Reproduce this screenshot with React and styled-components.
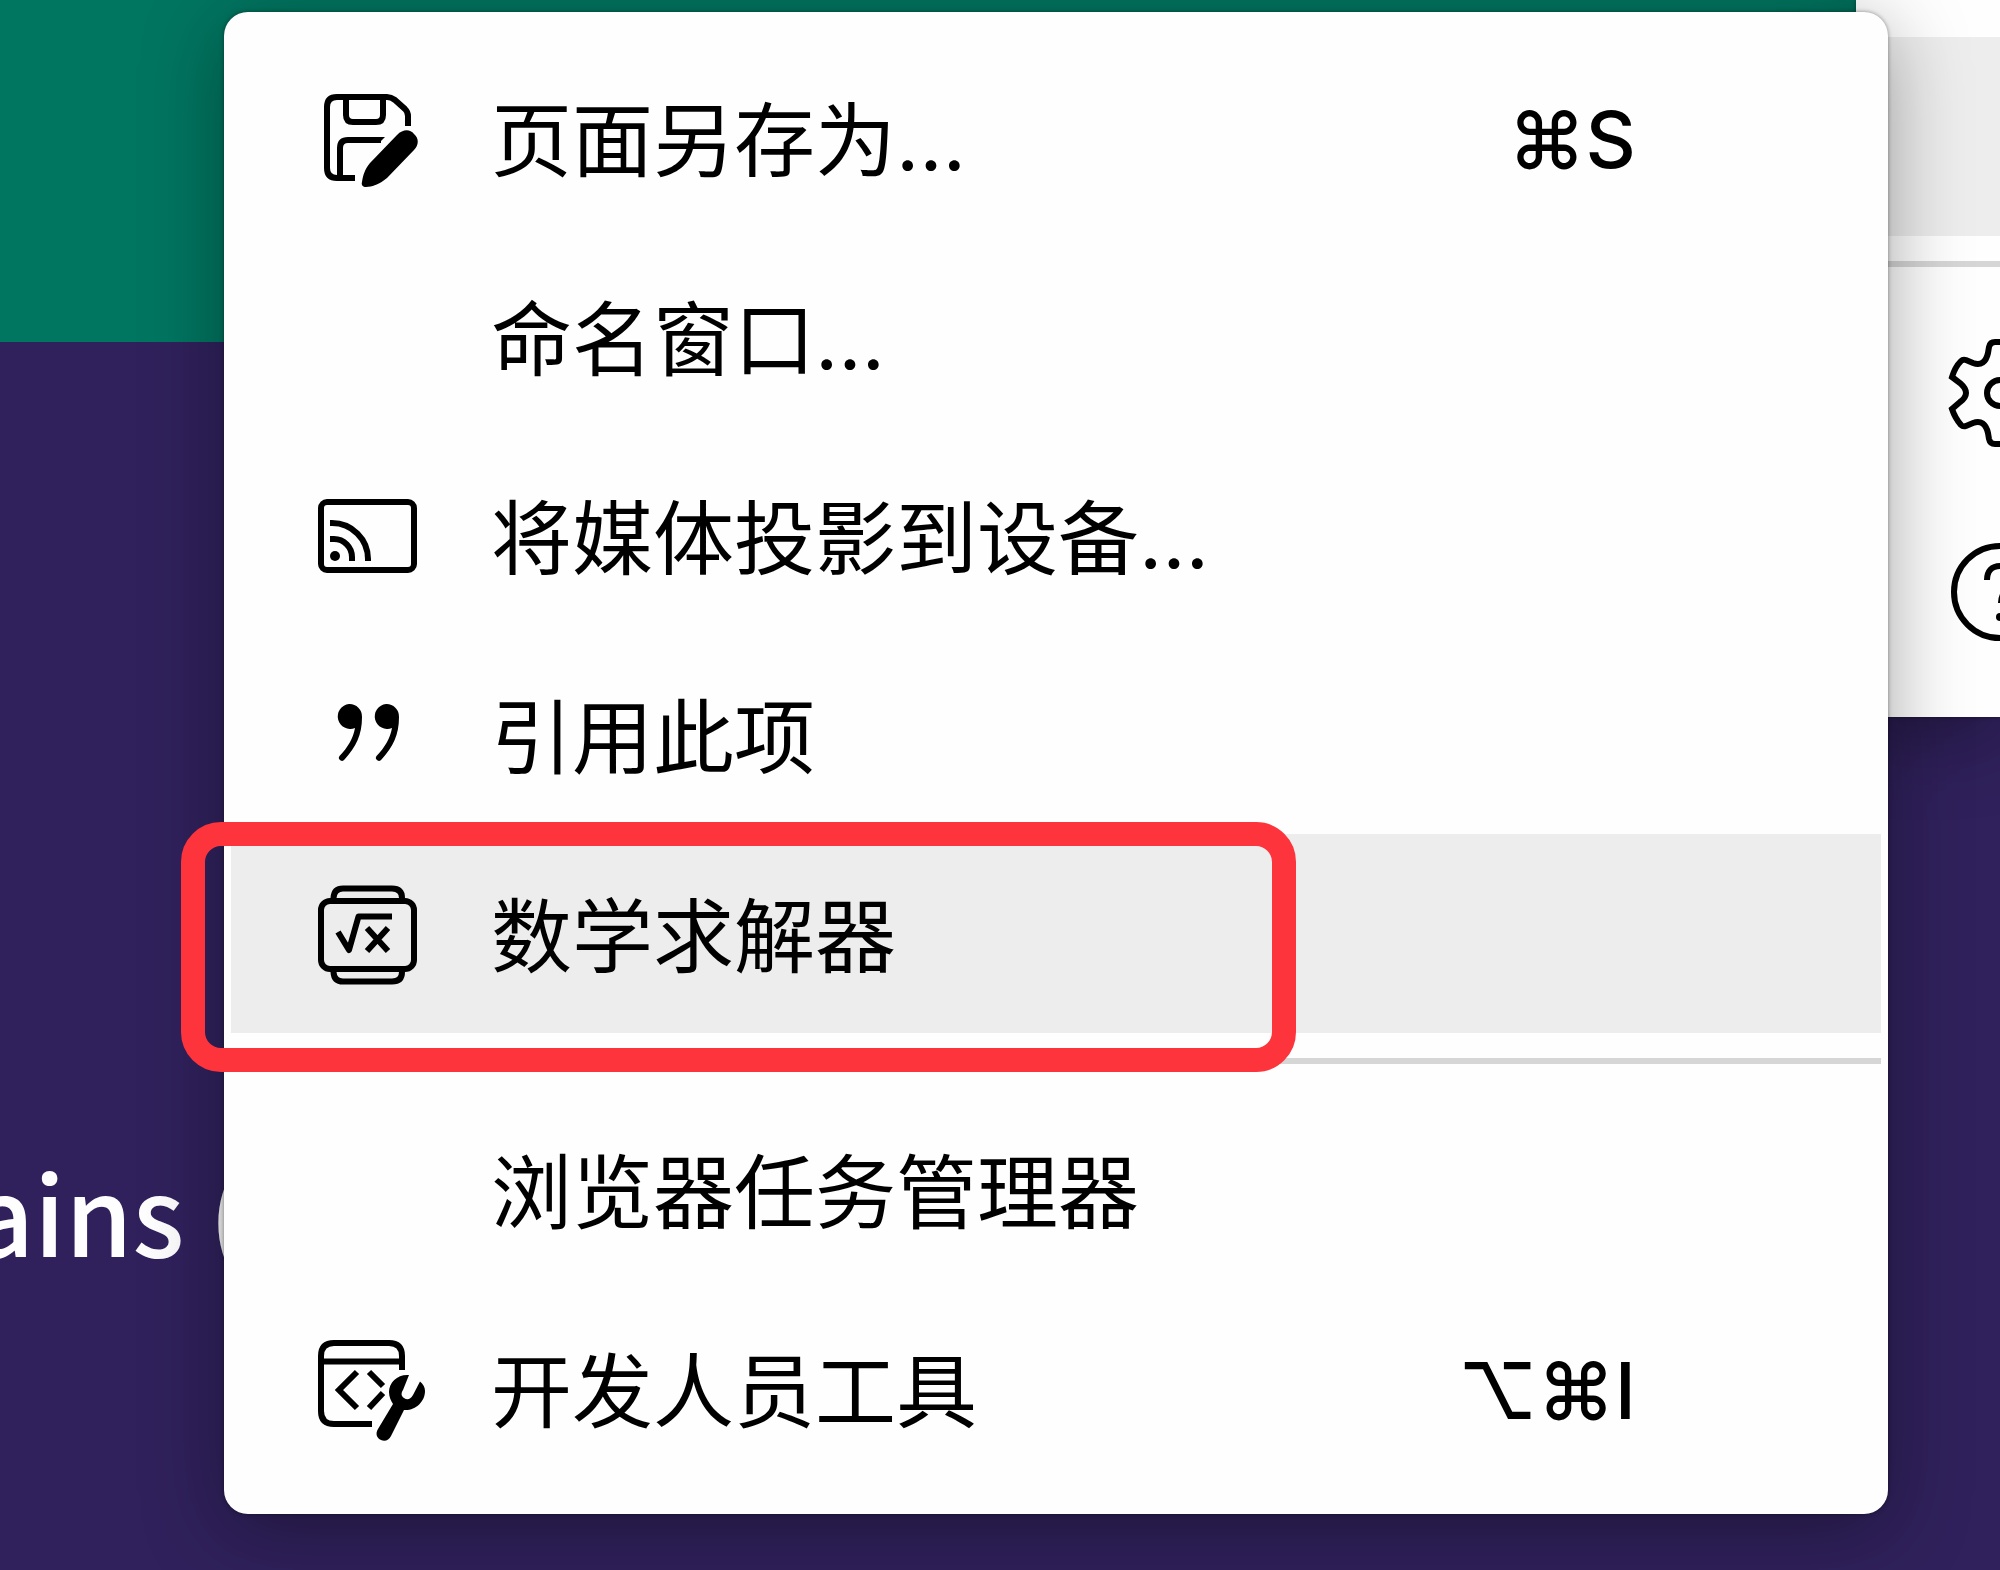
import React from 'react';
import styled, { createGlobalStyle, css } from 'styled-components';

const colors = {
  green: '#007560',
  purple: '#30215c',
  white: '#fefefe',
  black: '#000',
  hover: '#ededed',
  line: '#d6d6d6',
  red: '#fe343c'
};

const fonts = {
  MENU: "Inter, 'Noto Sans CJK SC', sans-serif",
  HEADLINE: "'Noto Sans CJK SC', sans-serif"
};

const GlobalStyle = createGlobalStyle`
  *, *::before, *::after {
    box-sizing: border-box;
  }

  body {
    margin: 0;
    background: ${colors.purple};
  }
`;

const Page = styled.div`
  position: relative;
  display: grid;
  min-height: 100vh;
  overflow: hidden;
`;

const Backdrop = styled.main`
  grid-area: 1 / 1;
  display: flex;
  flex-direction: column;
  background: ${colors.purple};
`;

const Banner = styled.header`
  height: 342px;
  background: ${colors.green};
`;

const Headline = styled.h1`
  margin: 798px 0 0 -28px;
  font-family: ${fonts.HEADLINE};
  font-size: 108px;
  font-weight: 500;
  line-height: 140px;
  white-space: nowrap;
  color: ${colors.white};
`;

const shadow = css`
  box-shadow: 0 16px 80px rgba(0, 0, 0, 0.36), 0 0 4px rgba(0, 0, 0, 0.4);
`;

const ParentMenu = styled.div`
  position: absolute;
  top: 0;
  right: 0;
  width: 144px;
  padding: 37px 0 26px 7px;
  overflow: hidden;
  background: ${colors.white};
  ${shadow}
`;

const SubmenuArea = styled.div`
  grid-area: 1 / 1;
  z-index: 1;
  padding: 12px 112px 56px 224px;
`;

const Menu = styled.div`
  padding: 26px 7px;
  border-radius: 24px;
  background: ${colors.white};
  ${shadow}
`;

const Row = styled.button`
  position: relative;
  display: flex;
  align-items: center;
  gap: 65px;
  width: 100%;
  height: 199px;
  padding: 0 245px 0 79px;
  border: 0;
  background: ${p => (p.$active ? colors.hover : 'transparent')};
  color: ${colors.black};
  font-family: ${fonts.MENU};
  font-size: 81px;
  line-height: 100px;
  text-align: left;
  white-space: nowrap;
`;

const ParentRow = styled(Row)`
  padding-right: 0;
`;

const IconSlot = styled.span`
  flex: none;
  width: 116px;
  height: 116px;
`;

const Label = styled.span`
  flex: 1;
  padding-top: 6px;
`;

const Shortcut = styled.kbd`
  padding-top: 4px;
  font-family: inherit;
  font-size: 78px;
  font-weight: 500;
`;

const Separator = styled.hr`
  height: 6px;
  margin: 25px 0 26px;
  border: 0;
  background: ${colors.line};
`;

const Highlight = styled.span`
  position: absolute;
  top: -12px;
  left: -50px;
  width: 1115px;
  height: 250px;
  border: 24px solid ${colors.red};
  border-radius: 40px;
  pointer-events: none;
`;

const Svg = styled.svg`
  display: block;
  width: 116px;
  height: 116px;
  fill: none;
  stroke: currentColor;
  stroke-width: 6px;

  .solid {
    fill: currentColor;
    stroke: none;
  }
`;

const Icon = ({ children }) => (
  <Svg viewBox="0 0 116 116" aria-hidden="true">
    {children}
  </Svg>
);

const SaveIcon = () => (
  <Icon>
    <path d="M98 46V36Q98 32 95 29L85 20Q81 17 77 17H27Q17 17 17 27V88Q17 98 27 98H45" />
    <path d="M36 17V35Q36 42 43 42H66Q73 42 73 35V17" />
    <path d="M30 97V68Q30 60 38 60H71" />
    <path className="solid" d="M70 57H75L69 63H66Z" />
    <path
      className="solid"
      d="M87 55C93 49 100 49 104 54C109 58 109 65 104 70L77 98C70 104 62 107 56 107C53 107 51 105 52 102C53 95 55 89 60 83Z"
    />
  </Icon>
);

const CastIcon = () => (
  <Icon>
    <rect x="11" y="24" width="93" height="68" rx="6" />
    <circle className="solid" cx="25" cy="78" r="5" />
    <path d="M20 61H24A18 18 0 0 1 42 79V83" />
    <path d="M20 45H22A36 36 0 0 1 58 81V83" />
  </Icon>
);

const quoteMark =
  'M39 27A12.5 12.5 0 0 1 52 40C52 58 46 70 34.5 82.5A3 3 0 0 1 29.5 79C38 70 43 62 45 51A12.5 12.5 0 1 1 39 27Z';

const QuoteIcon = () => (
  <Icon>
    <path className="solid" d={quoteMark} />
    <path className="solid" d={quoteMark} transform="translate(37 0)" />
  </Icon>
);

const MathIcon = () => (
  <Icon>
    <rect x="11" y="25" width="93" height="68" rx="9" />
    <path d="M23.5 25V22Q24 12.5 33 12.5H82Q92 12.5 92 22V25" />
    <path d="M23.5 93V96Q24 105.5 33 105.5H82Q92 105.5 92 96V93" />
    <path d="M28 56L39 74L48.5 40.5H82" strokeLinejoin="round" />
    <path d="M57 52L78 75M78 52L57 75" />
  </Icon>
);

const DevToolsIcon = () => (
  <Icon>
    <path d="M92 39V25Q92 12 79 12H24Q11 12 11 25V80Q11 93 24 93H62" />
    <path d="M11 30.5H92" />
    <path d="M47 41L29 59L47 77M59 41L73 55M73 62L59 77" />
    <path
      className="solid"
      d="M99 44C88 43 79 51 79 61C79 66 81 70 83 73L68 98C65 103 67 107 71 109C75 111 79 109 81 105L94 79C105 80 115 71 115 60C115 56 113 53 110 50.5L103 64C100 69 97 69 94 67C91 65 91 62 93 59Z"
    />
  </Icon>
);

const gearHalf =
  'M58 7H53Q48 7 47 12L46 18C44 27 39 31 31 28L24 25Q21 24 19 26Q13 32 10 42L18 48C26 55 26 61 18 67L10 74Q13 83 19 90Q21 92 24 91L31 88C39 85 44 89 46 98L47 104Q48 109 53 109H58';

const GearIcon = () => (
  <Icon>
    <path d={gearHalf} />
    <path d={gearHalf} transform="translate(116 0) scale(-1 1)" />
    <circle cx="58" cy="58" r="13" />
  </Icon>
);

const HelpIcon = () => (
  <Icon>
    <circle cx="58" cy="58" r="46" />
    <path d="M45 46C45 37 50 32 58 32C66 32 71 37 71 44C71 54 59 55 59 69" />
    <circle className="solid" cx="58" cy="83" r="4" />
  </Icon>
);

const pageItems = [
  { label: '页面另存为…', icon: SaveIcon, shortcut: '⌘S' },
  { label: '命名窗口…' },
  { label: '将媒体投影到设备…', icon: CastIcon },
  { label: '引用此项', icon: QuoteIcon },
  { label: '数学求解器', icon: MathIcon, active: true }
];

const toolItems = [
  { label: '浏览器任务管理器' },
  { label: '开发人员工具', icon: DevToolsIcon, shortcut: '⌥⌘I' }
];

function MenuItem({ label, icon: ItemIcon, shortcut, active }) {
  return (
    <Row type="button" role="menuitem" $active={active}>
      <IconSlot>{ItemIcon && <ItemIcon />}</IconSlot>
      <Label>{label}</Label>
      {shortcut && <Shortcut>{shortcut}</Shortcut>}
      {active && <Highlight />}
    </Row>
  );
}

export default function App() {
  return (
    <Page>
      <GlobalStyle />
      <Backdrop>
        <Banner />
        <Headline>ains (</Headline>
      </Backdrop>
      <ParentMenu role="menu">
        <ParentRow type="button" role="menuitem" aria-label="更多工具" $active />
        <Separator />
        <ParentRow type="button" role="menuitem" aria-label="设置">
          <IconSlot>
            <GearIcon />
          </IconSlot>
        </ParentRow>
        <ParentRow type="button" role="menuitem" aria-label="帮助">
          <IconSlot>
            <HelpIcon />
          </IconSlot>
        </ParentRow>
      </ParentMenu>
      <SubmenuArea>
        <Menu role="menu">
          {pageItems.map(item => (
            <MenuItem key={item.label} {...item} />
          ))}
          <Separator />
          {toolItems.map(item => (
            <MenuItem key={item.label} {...item} />
          ))}
        </Menu>
      </SubmenuArea>
    </Page>
  );
}
